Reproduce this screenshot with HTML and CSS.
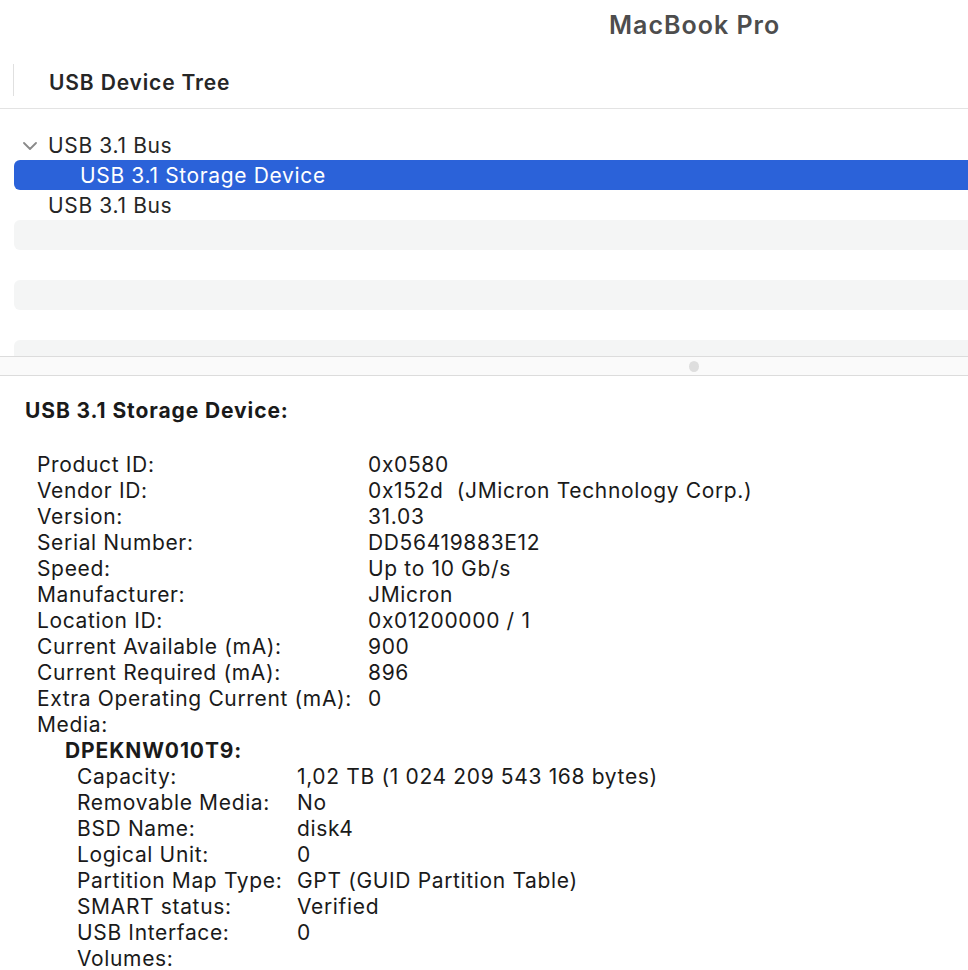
FILE: index.html
```html
<!DOCTYPE html>
<html>
<head>
<meta charset="utf-8">
<link rel="stylesheet" href="styles.css">
</head>
<body>
<div class="titlebar"><span class="title">MacBook Pro</span></div>
<div class="colheader">
  <div class="colsep"></div>
  <div class="coltitle">USB Device Tree</div>
</div>
<div class="tree">
  <div class="row"><svg class="chev" width="14" height="8" viewBox="0 0 14 8"><path d="M1 1 L7 7 L13 1" fill="none" stroke="#8a8a8a" stroke-width="1.8" stroke-linecap="round" stroke-linejoin="round"/></svg><span class="lbl">USB 3.1 Bus</span></div>
  <div class="row sel"><span class="lbl l2">USB 3.1 Storage Device</span></div>
  <div class="row"><span class="lbl">USB 3.1 Bus</span></div>
  <div class="row stripe"></div>
  <div class="row"></div>
  <div class="row stripe"></div>
  <div class="row"></div>
  <div class="row stripe cut"></div>
</div>
<div class="splitter"><span class="knob"></span></div>
<div class="detail">
  <div class="dtitle">USB 3.1 Storage Device:</div>
  <div class="props">
    <div class="k">Product ID:</div><div class="v">0x0580</div>
    <div class="k">Vendor ID:</div><div class="v">0x152d&nbsp; (JMicron Technology Corp.)</div>
    <div class="k">Version:</div><div class="v">31.03</div>
    <div class="k">Serial Number:</div><div class="v">DD56419883E12</div>
    <div class="k">Speed:</div><div class="v">Up to 10 Gb/s</div>
    <div class="k">Manufacturer:</div><div class="v">JMicron</div>
    <div class="k">Location ID:</div><div class="v">0x01200000 / 1</div>
    <div class="k">Current Available (mA):</div><div class="v">900</div>
    <div class="k">Current Required (mA):</div><div class="v">896</div>
    <div class="k">Extra Operating Current (mA):</div><div class="v">0</div>
    <div class="k">Media:</div><div class="v"></div>
  </div>
  <div class="media">
    <div class="mtitle">DPEKNW010T9:</div>
    <div class="sub">
      <div class="k">Capacity:</div><div class="v">1,02 TB (1 024 209 543 168 bytes)</div>
      <div class="k">Removable Media:</div><div class="v">No</div>
      <div class="k">BSD Name:</div><div class="v">disk4</div>
      <div class="k">Logical Unit:</div><div class="v">0</div>
      <div class="k">Partition Map Type:</div><div class="v">GPT (GUID Partition Table)</div>
      <div class="k">SMART status:</div><div class="v">Verified</div>
      <div class="k">USB Interface:</div><div class="v">0</div>
      <div class="k">Volumes:</div><div class="v"></div>
    </div>
  </div>
</div>
</body>
</html>
```
FILE: styles.css
```css
html, body { margin: 0; padding: 0; background: #fff; }
body {
  font-family: Inter, "Noto Sans", "Liberation Sans", sans-serif;
  color: #1f1f1f;
  width: 968px;
  height: 970px;
  overflow: hidden;
}
.titlebar {
  height: 50px;
  display: flex;
  align-items: center;
  padding-left: 609px;
}
.title {
  font-size: 25px;
  font-weight: 600;
  color: #4d4d4d;
  letter-spacing: 1px;
}
.colheader {
  height: 58px;
  display: flex;
  align-items: center;
  border-bottom: 1px solid #e3e3e3;
}
.colsep {
  width: 1px;
  height: 32px;
  background: #e0e0e0;
  margin-left: 13px;
  margin-top: 2px;
}
.coltitle {
  margin-left: 35px;
  font-size: 21px;
  font-weight: 600;
  color: #262626;
  letter-spacing: 0.85px;
  margin-top: 6px;
}
.tree {
  padding-top: 21px;
  height: 226px;
  overflow: hidden;
}
.row {
  height: 30px;
  margin-left: 14px;
  display: flex;
  align-items: center;
  font-size: 21px;
  letter-spacing: 0.65px;
  color: #262626;
  position: relative;
}
.row .lbl { margin-left: 34px; }
.row .chev { position: absolute; left: 9px; top: 12px; }
.row .l2 { margin-left: 66px; }
.row.sel {
  background: #2b62d9;
  color: #fff;
  border-radius: 6px 0 0 6px;
}
.row.stripe {
  background: #f4f5f5;
  border-radius: 6px 0 0 6px;
}
.splitter {
  height: 18px;
  border-top: 1px solid #dcdcdc;
  border-bottom: 1px solid #dcdcdc;
  background: #fafafa;
  display: flex;
  align-items: center;
  padding-left: 689px;
}
.knob {
  width: 10px;
  height: 11px;
  border-radius: 50%;
  background: #dedede;
}
.detail {
  padding-top: 20px;
  font-size: 21px;
  letter-spacing: 0.65px;
  color: #1a1a1a;
}
.dtitle {
  margin-left: 25px;
  margin-top: 2px;
  font-size: 21px;
  font-weight: 700;
  letter-spacing: 0.9px;
  line-height: 26px;
  height: 28px;
  margin-bottom: 26px;
}
.props {
  margin-left: 37px;
  display: grid;
  grid-template-columns: 331px 1fr;
  grid-auto-rows: 26px;
  line-height: 26px;
}
.media { margin-left: 65px; line-height: 26px; }
.mtitle { font-weight: 700; font-size: 21px; letter-spacing: 0.9px; height: 26px; }
.sub {
  margin-left: 12px;
  display: grid;
  grid-template-columns: 220px 1fr;
  grid-auto-rows: 26px;
}
.k, .v { white-space: nowrap; }
```
